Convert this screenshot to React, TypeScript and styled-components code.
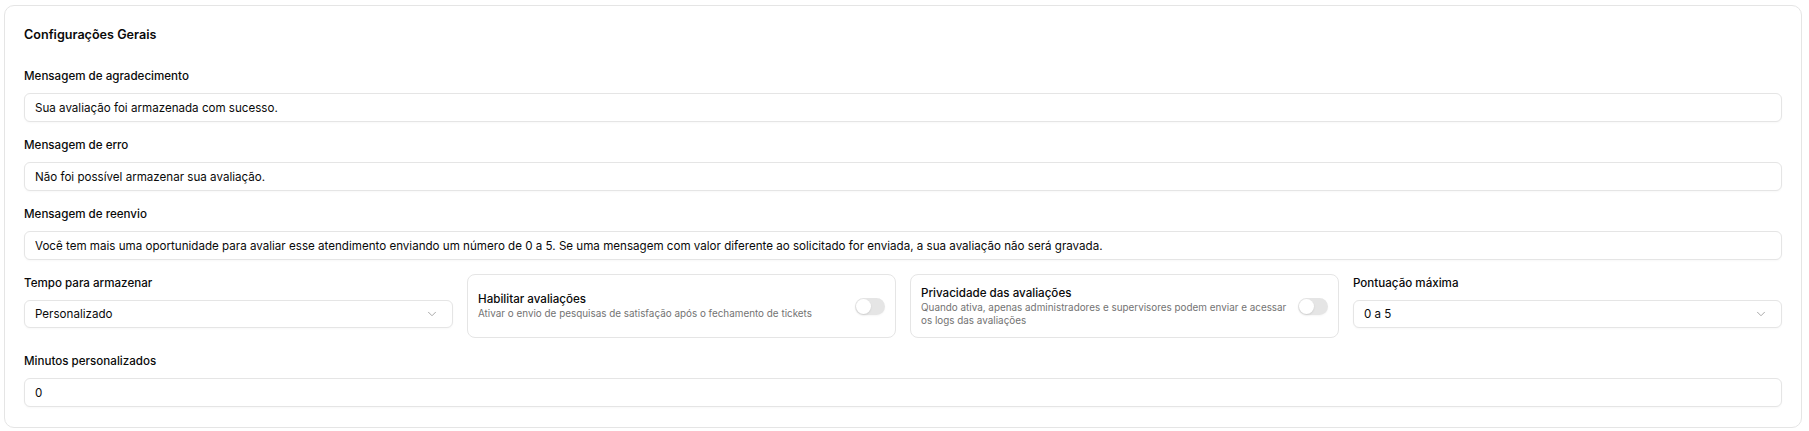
import * as React from 'react';
import styled, { createGlobalStyle } from 'styled-components';
import { ChevronDown } from 'lucide-react';

const GlobalStyle = createGlobalStyle`
  html, body {
    margin: 0;
    padding: 0;
    background: #ffffff;
  }
  body {
    font-family: Inter, "Noto Sans", "Liberation Sans", sans-serif;
    color: #0a0a0a;
    -webkit-font-smoothing: antialiased;
  }
  * {
    box-sizing: border-box;
  }
`;

interface SwitchSetting {
  title: string;
  description: string;
  enabled: boolean;
}

const switches: SwitchSetting[] = [
  {
    title: 'Habilitar avaliações',
    description: 'Ativar o envio de pesquisas de satisfação após o fechamento de tickets',
    enabled: false,
  },
  {
    title: 'Privacidade das avaliações',
    description:
      'Quando ativa, apenas administradores e supervisores podem enviar e acessar os logs das avaliações',
    enabled: false,
  },
];

const messages = [
  { label: 'Mensagem de agradecimento', value: 'Sua avaliação foi armazenada com sucesso.' },
  { label: 'Mensagem de erro', value: 'Não foi possível armazenar sua avaliação.' },
  {
    label: 'Mensagem de reenvio',
    value:
      'Você tem mais uma oportunidade para avaliar esse atendimento enviando um número de 0 a 5. Se uma mensagem com valor diferente ao solicitado for enviada, a sua avaliação não será gravada.',
  },
];

const SelectBox = ({ value }: { value: string }) => (
  <SelectTrigger type="button">
    <span>{value}</span>
    <ChevronDown size={14} strokeWidth={1.6} color="#a3a3a3" />
  </SelectTrigger>
);

const SwitchCard = ({ title, description, enabled }: SwitchSetting) => (
  <SwitchBox>
    <SwitchText>
      <SwitchTitle>{title}</SwitchTitle>
      <SwitchDescription>{description}</SwitchDescription>
    </SwitchText>
    <Toggle $on={enabled} role="switch" aria-checked={enabled}>
      <Thumb $on={enabled} />
    </Toggle>
  </SwitchBox>
);

export default function App() {
  return (
    <Page>
      <GlobalStyle />
      <Card>
        <Title>Configurações Gerais</Title>
        <Form>
          {messages.map(m => (
            <Field key={m.label}>
              <Label>{m.label}</Label>
              <Input defaultValue={m.value} />
            </Field>
          ))}
          <Row>
            <Field>
              <Label>Tempo para armazenar</Label>
              <SelectBox value="Personalizado" />
            </Field>
            {switches.map(s => (
              <SwitchCard key={s.title} {...s} />
            ))}
            <Field>
              <Label>Pontuação máxima</Label>
              <SelectBox value="0 a 5" />
            </Field>
          </Row>
          <Field>
            <Label>Minutos personalizados</Label>
            <Input defaultValue="0" />
          </Field>
        </Form>
      </Card>
    </Page>
  );
}

const Page = styled.div`
  padding: 5px 7px 4px 4px;
`;

const Card = styled.section`
  background: #ffffff;
  border: 1px solid #e5e5e5;
  border-radius: 10px;
  padding: 19px 19px 20px 19px;
`;

const Title = styled.h2`
  margin: 0 0 22px;
  font-size: 12.6px;
  line-height: 20px;
  font-weight: 600;
  color: #0a0a0a;
`;

const Form = styled.div`
  display: flex;
  flex-direction: column;
  gap: 14px;
`;

const Field = styled.div`
  display: flex;
  flex-direction: column;
  gap: 8px;
  min-width: 0;
`;

const Label = styled.label`
  font-size: 11.6px;
  line-height: 18px;
  font-weight: 500;
  color: #0a0a0a;
`;

const Input = styled.input`
  height: 29px;
  width: 100%;
  padding: 0 10px;
  border: 1px solid #e5e5e5;
  border-radius: 6px;
  background: #ffffff;
  box-shadow: 0 1px 2px rgba(0, 0, 0, 0.03);
  font-family: inherit;
  font-size: 11.6px;
  color: #0a0a0a;
  outline: none;
`;

const SelectTrigger = styled.button`
  height: 28px;
  width: 100%;
  display: flex;
  align-items: center;
  justify-content: space-between;
  padding: 0 13px 0 10px;
  border: 1px solid #e5e5e5;
  border-radius: 6px;
  background: #ffffff;
  box-shadow: 0 1px 2px rgba(0, 0, 0, 0.03);
  font-family: inherit;
  font-size: 11.6px;
  color: #0a0a0a;
  cursor: pointer;
`;

const Row = styled.div`
  display: grid;
  grid-template-columns: repeat(4, minmax(0, 1fr));
  gap: 14px;
  align-items: stretch;
`;

const SwitchBox = styled.div`
  display: flex;
  align-items: center;
  justify-content: space-between;
  gap: 6px;
  padding: 9.5px 10px;
  border: 1px solid #e5e5e5;
  border-radius: 8px;
  background: #ffffff;
`;

const SwitchText = styled.div`
  display: flex;
  flex-direction: column;
  min-width: 0;
`;

const SwitchTitle = styled.div`
  font-size: 11.6px;
  line-height: 16px;
  font-weight: 500;
  color: #0a0a0a;
`;

const SwitchDescription = styled.div`
  font-size: 9.9px;
  line-height: 13.5px;
  color: #737373;
`;

const Toggle = styled.div<{ $on: boolean }>`
  flex: none;
  width: 30px;
  height: 17px;
  border-radius: 999px;
  padding: 1px;
  background: ${p => (p.$on ? '#171717' : '#e5e5e5')};
  display: flex;
  justify-content: ${p => (p.$on ? 'flex-end' : 'flex-start')};
  box-shadow: 0 1px 2px rgba(0, 0, 0, 0.04);
`;

const Thumb = styled.span<{ $on: boolean }>`
  width: 15px;
  height: 15px;
  border-radius: 50%;
  background: #ffffff;
  box-shadow: 0 1px 2px rgba(0, 0, 0, 0.1);
`;
